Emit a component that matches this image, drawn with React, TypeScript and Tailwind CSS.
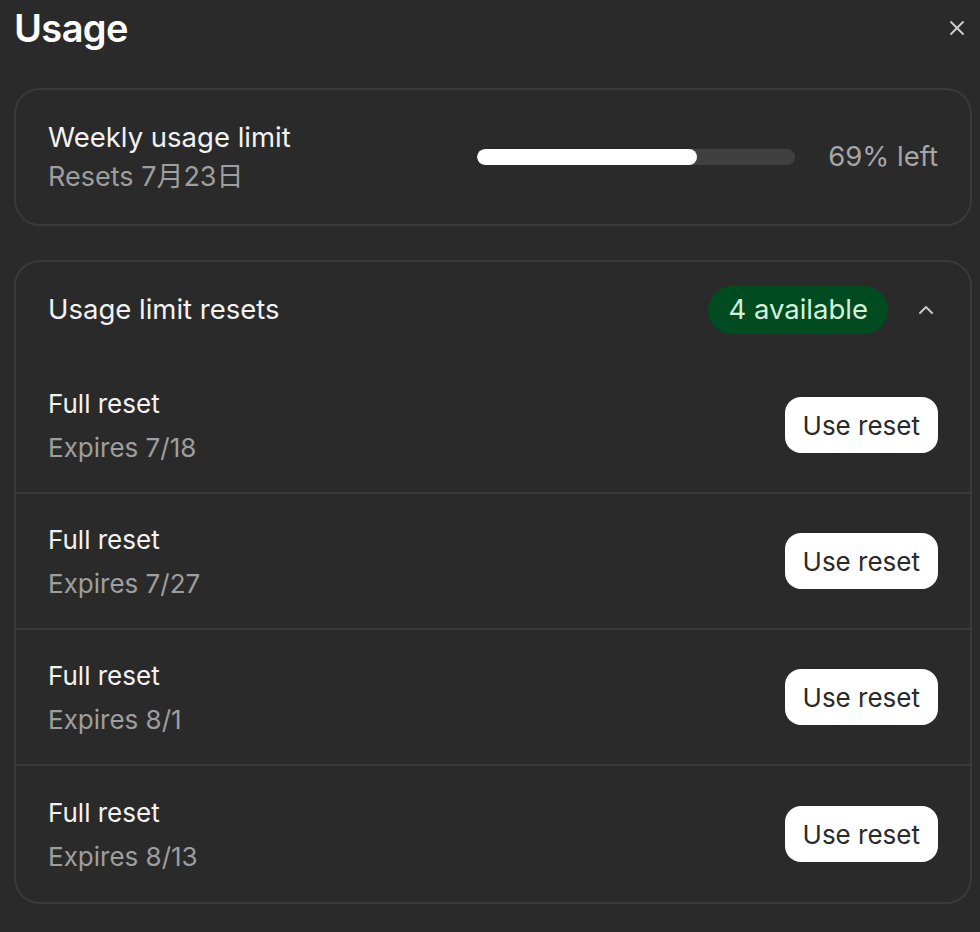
import React from 'react';
import { X, ChevronUp } from 'lucide-react';

const resets = [
  { label: 'Full reset', expires: 'Expires 7/18' },
  { label: 'Full reset', expires: 'Expires 7/27' },
  { label: 'Full reset', expires: 'Expires 8/1' },
  { label: 'Full reset', expires: 'Expires 8/13' },
];

export default function App() {
  const left = 69;
  return (
    <div
      className="w-[980px] h-[932px] bg-[#2a2a2a] text-white overflow-hidden pl-[14px] pr-[8px]"
      style={{ fontFamily: 'Inter, "Noto Sans CJK SC", sans-serif' }}
    >
      <div className="flex items-center justify-between h-[56px]">
        <h1 className="text-[38px] font-semibold tracking-[-0.6px] leading-none">Usage</h1>
        <X className="w-6 h-6 text-[#d0d0d0] mr-[3px]" strokeWidth={1.8} />
      </div>

      <div className="mt-[32px] h-[138px] rounded-[26px] border-2 border-[#3a3a3a] flex items-center justify-between pl-[32px] pr-[32px]">
        <div>
          <p className="text-[27.5px] leading-[40px] text-[#f2f2f2]">Weekly usage limit</p>
          <p className="text-[27px] leading-[40px] text-[#9e9e9e]">Resets 7月23日</p>
        </div>
        <div className="flex items-center gap-[33px]">
          <div className="w-[318px] h-4 rounded-full bg-[#404040] overflow-hidden">
            <div className="h-full rounded-full bg-white" style={{ width: `${left}%` }} />
          </div>
          <span className="text-[27.5px] text-[#a6a6a6]">{left}% left</span>
        </div>
      </div>

      <div className="mt-[34px] rounded-[26px] border-2 border-[#3a3a3a]">
        <div className="h-[96px] flex items-center justify-between pl-[32px] pr-[32px]">
          <span className="text-[27.5px] text-[#f2f2f2]">Usage limit resets</span>
          <div className="flex items-center gap-[26px]">
            <span className="h-12 px-[20px] rounded-full bg-[#004b1f] text-[#d4f0dc] text-[27.5px] flex items-center">
              4 available
            </span>
            <ChevronUp className="w-6 h-6 text-[#c8c8c8]" strokeWidth={2} />
          </div>
        </div>
        <div className="divide-y-2 divide-[#3a3a3a]">
          {resets.map((r, i) => (
            <div key={i} className="h-[136px] flex items-center justify-between pl-[32px] pr-[32px]">
              <div className="mt-[2px]">
                <p className="text-[26px] leading-[44px] text-[#f2f2f2]">{r.label}</p>
                <p className="text-[26px] leading-[44px] text-[#9e9e9e]">{r.expires}</p>
              </div>
              <button className="h-14 px-[18px] rounded-[16px] bg-white text-[#2a2a2a] text-[26px]">
                Use reset
              </button>
            </div>
          ))}
        </div>
      </div>
    </div>
  );
}
